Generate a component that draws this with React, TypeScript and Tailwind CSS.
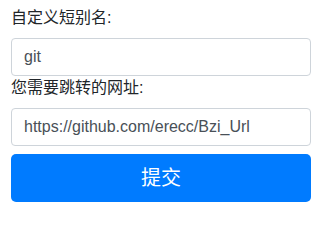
export default function App() {
  const font = { fontFamily: '"Liberation Sans", "Noto Sans CJK SC", sans-serif' };
  return (
    <div className="w-[321px] h-[210px] bg-white px-[11px] pt-[6px] text-[#212529]" style={font}>
      <form className="flex flex-col" onSubmit={(e) => e.preventDefault()}>
        <label className="mb-2 text-base leading-6">自定义短别名:</label>
        <input
          defaultValue="git"
          className="h-[38px] w-[300px] rounded border border-[#ced4da] px-3 text-base text-[#495057] outline-none"
        />
        <label className="mb-2 text-base leading-6">您需要跳转的网址:</label>
        <input
          defaultValue="https://github.com/erecc/Bzi_Url"
          className="h-[38px] w-[300px] rounded border border-[#ced4da] px-3 text-base text-[#495057] outline-none"
        />
        <button
          type="submit"
          className="mt-2 h-12 w-[300px] rounded-[5px] bg-[#007bff] text-xl text-white"
        >
          提交
        </button>
      </form>
    </div>
  );
}
